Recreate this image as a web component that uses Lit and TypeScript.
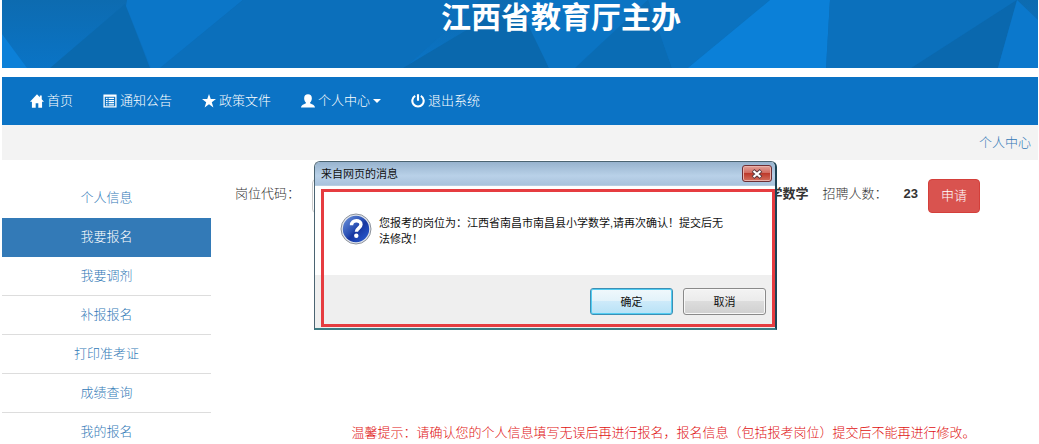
import { LitElement, html, css, svg } from "lit";
import { customElement, state } from "lit/decorators.js";

const icons = {
  home: svg`<path d="M8 0.400 0 8.800h2.200V15.600h4.300v-5h3v5h4.300V8.800H16L13.400 6V1.800h-2.200v1.900z"/>`,
  list: svg`<path fill-rule="evenodd" d="M.5.500h15v15H.5zM2 3v11h12V3zM3.400 4.400h1.800v1.400H3.400zm3 0h6.200v1.400H6.400zM3.400 6.800h1.800v1.400H3.400zm3 0h6.200v1.400H6.400zM3.400 9.200h1.800v1.400H3.400zm3 0h6.200v1.400H6.400zM3.400 11.600h1.800V13H3.400zm3 0h6.200V13H6.400z"/>`,
  star: svg`<path d="M8 0 10 5.800h6l-4.800 3.600L13 15.400 8 11.800 3 15.400l1.800-6L0 5.800h6z"/>`,
  user: svg`<path d="M8 0.200c2.800 0 4.400 1.800 4.400 4.600 0 2-.8 3.800-2 4.800v1c.8.900 5.400 1.600 5.600 4.900H0c.2-3.300 4.800-4 5.600-4.900v-1c-1.200-1-2-2.800-2-4.800C3.600 2 5.200.2 8 .2z"/>`,
  off: svg`<path d="M4.800 2.200a6.500 6.500 0 1 0 6.400 0M8 .2v7.400" fill="none" stroke="currentColor" stroke-width="2.400"/>`,
};

const navItems = [
  { icon: icons.home, label: "首页", menu: false },
  { icon: icons.list, label: "通知公告", menu: false },
  { icon: icons.star, label: "政策文件", menu: false },
  { icon: icons.user, label: "个人中心", menu: true },
  { icon: icons.off, label: "退出系统", menu: false },
];

const sideItems = ["个人信息", "我要报名", "我要调剂", "补报报名", "打印准考证", "成绩查询", "我的报名"];

@customElement("confirm-dialog")
export class ConfirmDialog extends LitElement {
  static styles = css`
    :host {
      display: block;
      box-sizing: border-box;
      border: 1px solid #4b6472;
      border-right: 2px solid #1d4254;
      border-bottom: 2px solid #3b7c84;
      border-radius: 6px 6px 0 0;
      background: #efefef;
      color: #111;
      font-size: 11px;
      font-weight: 400;
      overflow: hidden;
    }
    .titlebar {
      display: flex;
      align-items: center;
      justify-content: space-between;
      height: 24px;
      box-sizing: border-box;
      padding: 0 3px 0 6px;
      background: linear-gradient(#97b3ce, #b9d1e8 60%, #a9c3dd);
      border-bottom: 1px solid #b9cfe2;
    }
    .title {
      margin: 0;
      font-size: 11px;
      font-weight: 400;
    }
    .close {
      display: grid;
      place-items: center;
      width: 30px;
      height: 17px;
      padding: 0;
      border: 1px solid #6e2f35;
      border-radius: 3px;
      background: linear-gradient(#e3a199, #d0685d 48%, #bd3a2c 50%, #d4705e);
      box-shadow: inset 0 0 0 1px #e9b2aa;
    }
    .frame {
      position: absolute;
      inset: 27px 0 1px 6px;
      border: 3px solid #e63c40;
      pointer-events: none;
    }
    .message {
      display: flex;
      gap: 7px;
      height: 89px;
      box-sizing: border-box;
      padding: 27px 30px 0 25px;
      background: #fff;
    }
    .text {
      flex: 1;
      margin: 2px 0 0;
      line-height: 16px;
    }
    .actions {
      display: flex;
      justify-content: flex-end;
      gap: 10px;
      padding: 13px 9px;
    }
    .button {
      width: 83px;
      height: 27px;
      padding: 0;
      border: 1px solid #8a8a8a;
      border-radius: 3px;
      background: linear-gradient(#f3f3f3, #ebebeb 48%, #dcdcdc 50%, #d0d0d0);
      box-shadow: inset 0 0 0 1px #f8f8f8;
      color: #111;
      font: inherit;
    }
    .primary {
      border-color: #3c8fb4;
      background: linear-gradient(#f0f8fc, #e2f2fa 48%, #cdeafa 50%, #b8e2f6);
      box-shadow: inset 0 0 0 1px #52cdf3;
    }
  `;

  private close() {
    this.dispatchEvent(new CustomEvent("dismiss"));
  }

  render() {
    return html`
      <header class="titlebar">
        <h2 class="title">来自网页的消息</h2>
        <button class="close" aria-label="关闭" @click=${this.close}>
          <svg width="12" height="10" viewBox="0 0 12 10">
            <path d="M2 1.500 10 8.500M10 1.500 2 8.500" stroke="#5b3a3f" stroke-width="4" />
            <path d="M2.500 2 9.500 8M9.500 2 2.500 8" stroke="#fff" stroke-width="2.200" />
          </svg>
        </button>
      </header>
      <div class="message">
        <svg width="32" height="32" viewBox="0 0 32 32">
          <defs>
            <linearGradient id="ball" x1="0" y1="0" x2="1" y2="1">
              <stop offset="0" stop-color="#6f95dc" />
              <stop offset="0.450" stop-color="#2a50b4" />
              <stop offset="0.550" stop-color="#1736a0" />
              <stop offset="1" stop-color="#2d62d8" />
            </linearGradient>
          </defs>
          <circle cx="16" cy="16" r="15" fill="#dfe4ec" stroke="#8c929c" />
          <circle cx="16" cy="16" r="13.200" fill="url(#ball)" />
          <path d="M11.500 12.300c0-6 9.500-6 9.500-.8 0 3.500-4.600 3.700-4.600 7.300" fill="none" stroke="#fff" stroke-width="3.400" />
          <circle cx="16.300" cy="22.800" r="2.200" fill="#fff" />
        </svg>
        <p class="text">您报考的岗位为：江西省南昌市南昌县小学数学,请再次确认！提交后无<br />法修改！</p>
      </div>
      <div class="actions">
        <button class="button primary" @click=${this.close}>确定</button>
        <button class="button" @click=${this.close}>取消</button>
      </div>
      <div class="frame"></div>
    `;
  }
}

@customElement("app-root")
export class AppRoot extends LitElement {
  @state() private confirming = true;

  static styles = css`
    :host {
      display: block;
      position: relative;
      box-sizing: border-box;
      height: 100vh;
      padding: 0 1px 0 2px;
      overflow: hidden;
      background: #fff;
      color: #333;
      font-family: "Liberation Sans", "Noto Sans CJK SC", sans-serif;
      font-size: 13px;
      font-weight: 300;
      line-height: 20px;
    }
    a {
      color: #337ab7;
      text-decoration: none;
    }
    .banner {
      display: grid;
      height: 68px;
      overflow: hidden;
      background: #0b70bd;
    }
    .facets,
    .host {
      grid-area: 1 / 1;
    }
    .facets {
      width: 100%;
      height: 68px;
    }
    .host {
      z-index: 1;
      margin: 0;
      padding-left: 82px;
      color: #fff;
      font-size: 30px;
      font-weight: 700;
      line-height: 36px;
      text-align: center;
    }
    .nav {
      display: flex;
      align-items: center;
      gap: 30px;
      height: 48px;
      margin-top: 9px;
      padding: 0 28px;
      background: #0b73c5;
    }
    .nav-link {
      display: flex;
      align-items: center;
      gap: 3px;
      color: #fff;
    }
    .glyph {
      width: 14px;
      height: 14px;
      fill: currentColor;
    }
    .caret {
      border: 4px solid transparent;
      border-top-color: currentColor;
      border-bottom: 0;
    }
    .crumbs {
      padding: 8px 7px 7px;
      background: #f3f3f3;
      text-align: right;
    }
    .layout {
      display: grid;
      grid-template-columns: 209px 1fr;
      gap: 24px;
      padding-top: 19px;
    }
    .side {
      margin: 0;
      padding: 0;
      list-style: none;
      text-align: center;
    }
    .side-link {
      display: block;
      padding: 9px 0;
      border-bottom: 1px solid #ddd;
    }
    .plain {
      border-color: transparent;
    }
    .active {
      border-color: #337ab7;
      background: #337ab7;
      color: #fff;
    }
    .row {
      display: flex;
      align-items: center;
      height: 34px;
      padding-right: 58px;
    }
    .field {
      width: 180px;
      height: 34px;
      box-sizing: border-box;
      margin-left: 12px;
      border: 1px solid #ccc;
      border-radius: 4px;
      font: inherit;
    }
    .row label,
    .row strong,
    .row span {
      line-height: 30px;
      align-self: flex-start;
    }
    .row strong {
      font-weight: 700;
    }
    .post {
      margin-left: auto;
    }
    .quota {
      margin-left: 14px;
    }
    .count {
      margin: 0 10px 0 16px;
    }
    .apply {
      height: 34px;
      padding: 0 12px;
      border: 1px solid #d43f3a;
      border-radius: 4px;
      background: #d9534f;
      color: #fff;
      font: inherit;
    }
    .tip {
      margin: 210px 0 0;
      padding-right: 56px;
      padding-left: 110px;
      color: #e01010;
      text-align: center;
      white-space: nowrap;
    }
    .dialog {
      position: absolute;
      top: 161px;
      left: 314px;
      width: 463px;
    }
  `;

  private renderBanner() {
    return html`
      <header class="banner">
        <svg class="facets" viewBox="2 0 1036 68" preserveAspectRatio="none">
          <defs>
            <linearGradient id="shade" x1="0" y1="0" x2="0" y2="1">
              <stop offset="0" stop-color="#0d6bb0" />
              <stop offset="1" stop-color="#0a74c6" />
            </linearGradient>
          </defs>
          <path fill="url(#shade)" d="M2 0H1038V68H2z" />
          <path fill="#0c80d8" d="M2 34 27 68H2z" />
          <path fill="#0a69ae" d="M125 4 150 68H50z" />
          <path fill="#0b76c8" d="M127 0H243L160 68H151L126 6z" />
          <path fill="#0b6fbb" d="M243 0H480L405 68H160z" />
          <path fill="#0a68ad" d="M480 22 520 0 549 68H403z" />
          <path fill="#0b74c3" d="M516 0H648L575 68H549z" />
          <path fill="#0a6cb4" d="M648 0 672 68H575z" />
          <path fill="#0b72bf" d="M648 0H770L688 68H672z" />
          <path fill="#0b80d8" d="M770 0H830L826 68H688z" />
          <path fill="#0b70bc" d="M830 0H1017L911 68H826z" />
          <path fill="#0a68ae" d="M1017 0 998 68H911z" />
          <path fill="#0b78cc" d="M1017 0 1038 20V68H998z" />
        </svg>
        <h1 class="host">江西省教育厅主办</h1>
      </header>
    `;
  }

  render() {
    return html`
      ${this.renderBanner()}
      <nav class="nav">
        ${navItems.map(
          (item) => html`
            <a class="nav-link" href="#">
              <svg class="glyph" viewBox="0 0 16 16">${item.icon}</svg>
              <span>${item.label}</span>
              ${item.menu ? html`<i class="caret"></i>` : ""}
            </a>
          `,
        )}
      </nav>
      <div class="crumbs"><a href="#">个人中心</a></div>
      <div class="layout">
        <ul class="side">
          ${sideItems.map(
            (label, i) => html`
              <li><a class="side-link ${i === 0 ? "plain" : i === 1 ? "active" : ""}" href="#">${label}</a></li>
            `,
          )}
        </ul>
        <main>
          <div class="row">
            <label for="code">岗位代码：</label>
            <input class="field" id="code" type="text" />
            <strong class="post">学数学</strong>
            <span class="quota">招聘人数：</span>
            <strong class="count">23</strong>
            <button class="apply" @click=${() => (this.confirming = true)}>申请</button>
          </div>
          <p class="tip">温馨提示：请确认您的个人信息填写无误后再进行报名，报名信息（包括报考岗位）提交后不能再进行修改。</p>
        </main>
      </div>
      ${this.confirming
        ? html`<confirm-dialog class="dialog" role="dialog" @dismiss=${() => (this.confirming = false)}></confirm-dialog>`
        : ""}
    `;
  }
}
